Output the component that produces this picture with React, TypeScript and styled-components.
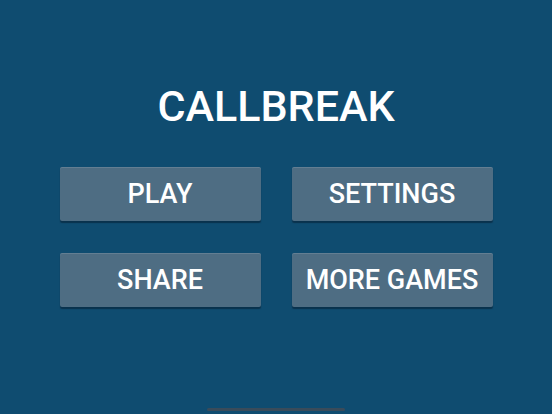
import React from 'react';
import styled, { createGlobalStyle } from 'styled-components';

const GlobalStyle = createGlobalStyle`
  html, body {
    margin: 0;
    padding: 0;
    height: 100%;
    background-color: #0f4c70;
  }
  #root {
    height: 100%;
  }
`;

const StyledScreen = styled.div`
  position: relative;
  width: 100vw;
  height: 100vh;
  box-sizing: border-box;
  background-color: #0f4c70;
  display: flex;
  flex-direction: column;
  align-items: center;
  padding-top: 81px;
  font-family: Roboto, 'Liberation Sans', sans-serif;
`;

const StyledTitle = styled.h1`
  margin: 0;
  font-size: 43px;
  font-weight: 500;
  line-height: 50px;
  color: #ffffff;
`;

const StyledMenu = styled.div`
  display: grid;
  grid-template-columns: 201px 201px;
  column-gap: 31px;
  row-gap: 32px;
  margin-top: 36px;
`;

const StyledButton = styled.button`
  width: 201px;
  height: 54px;
  border: none;
  border-radius: 2px;
  padding: 0;
  background-color: #4e6d83;
  box-shadow: inset 0 1px 0 rgba(255, 255, 255, 0.12), 0 2px 1px rgba(5, 30, 50, 0.55);
  color: #ffffff;
  font-family: inherit;
  font-size: 27px;
  font-weight: 500;
  cursor: pointer;
`;

const StyledHomeBar = styled.div`
  position: absolute;
  left: 207px;
  bottom: 3px;
  width: 138px;
  height: 3px;
  border-radius: 2px;
  background-color: #394b5a;
`;

const items = ['PLAY', 'SETTINGS', 'SHARE', 'MORE GAMES'];

const App: React.FC = () => {
  return (
    <>
      <GlobalStyle />
      <StyledScreen>
        <StyledTitle>CALLBREAK</StyledTitle>
        <StyledMenu>
          {items.map((label) => (
            <StyledButton key={label}>{label}</StyledButton>
          ))}
        </StyledMenu>
        <StyledHomeBar />
      </StyledScreen>
    </>
  );
};

export default App;
